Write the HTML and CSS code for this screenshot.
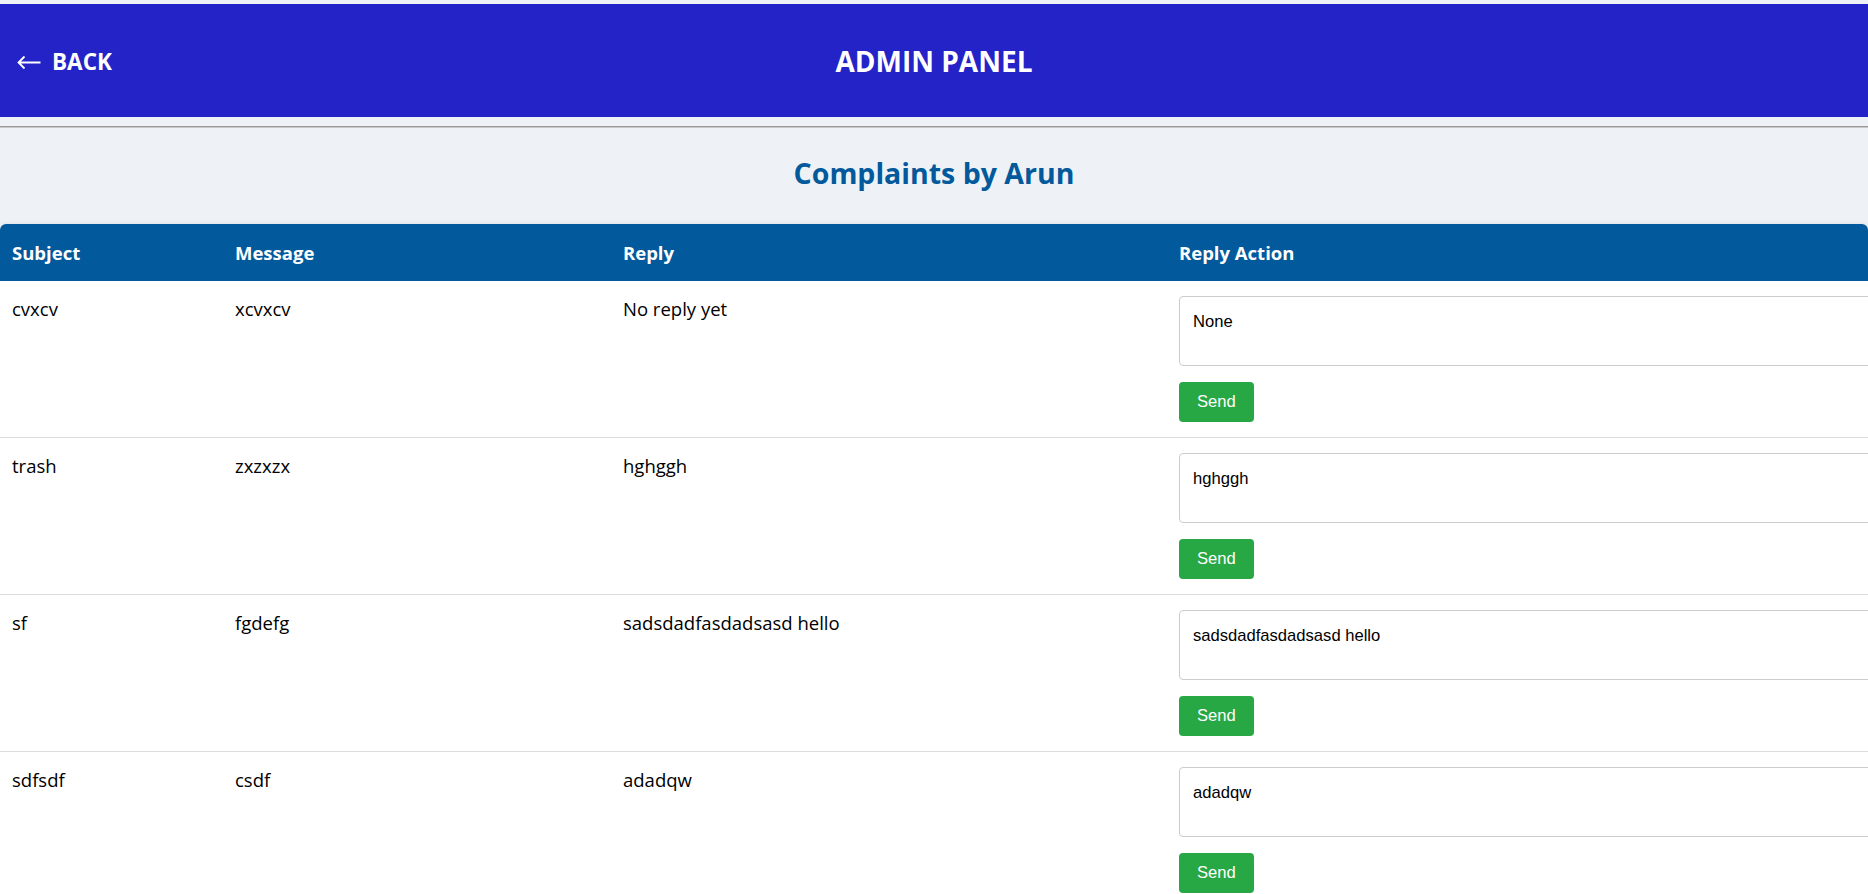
FILE: index.html
```html
<!DOCTYPE html>
<html lang="en">
<head>
<meta charset="utf-8">
<title>Admin Panel - Complaints</title>
<link rel="stylesheet" href="styles.css">
</head>
<body>
  <header class="topbar">
    <a class="back" href="#">
      <svg class="back-icon" width="24" height="14" viewBox="0 0 24 14" aria-hidden="true">
        <path d="M23.5 7H1.5M7.5 1L1.5 7L7.5 13" fill="none" stroke="#fff" stroke-width="1.8" stroke-linecap="butt" stroke-linejoin="miter"/>
      </svg>
      <span>BACK</span>
    </a>
    <h1 class="topbar-title">ADMIN PANEL</h1>
  </header>
  <hr class="divider">
  <main class="content">
    <h2 class="page-title">Complaints by Arun</h2>
    <div class="table-card">
      <table class="complaints">
        <colgroup>
          <col class="c-subject">
          <col class="c-message">
          <col class="c-reply">
          <col class="c-action">
        </colgroup>
        <thead>
          <tr>
            <th>Subject</th>
            <th>Message</th>
            <th>Reply</th>
            <th>Reply Action</th>
          </tr>
        </thead>
        <tbody>
          <tr>
            <td>cvxcv</td>
            <td>xcvxcv</td>
            <td>No reply yet</td>
            <td>
              <form class="reply-form">
                <textarea class="reply-input">None</textarea>
                <button type="button" class="send-btn">Send</button>
              </form>
            </td>
          </tr>
          <tr>
            <td>trash</td>
            <td>zxzxzx</td>
            <td>hghggh</td>
            <td>
              <form class="reply-form">
                <textarea class="reply-input">hghggh</textarea>
                <button type="button" class="send-btn">Send</button>
              </form>
            </td>
          </tr>
          <tr>
            <td>sf</td>
            <td>fgdefg</td>
            <td>sadsdadfasdadsasd hello</td>
            <td>
              <form class="reply-form">
                <textarea class="reply-input">sadsdadfasdadsasd hello</textarea>
                <button type="button" class="send-btn">Send</button>
              </form>
            </td>
          </tr>
          <tr>
            <td>sdfsdf</td>
            <td>csdf</td>
            <td>adadqw</td>
            <td>
              <form class="reply-form">
                <textarea class="reply-input">adadqw</textarea>
                <button type="button" class="send-btn">Send</button>
              </form>
            </td>
          </tr>
        </tbody>
      </table>
    </div>
  </main>
</body>
</html>
```
FILE: styles.css
```css
* { box-sizing: border-box; }

html, body {
  margin: 0;
  padding: 0;
  overflow-x: hidden;
}

body {
  background: #eef2f7;
  font-family: "Open Sans", "Noto Sans", sans-serif;
  color: #000;
  padding-top: 4px;
}

.topbar {
  position: relative;
  height: 113px;
  background: #2323c8;
  display: flex;
  align-items: center;
  justify-content: center;
}

.back {
  position: absolute;
  left: 17px;
  top: 50%;
  transform: translateY(-50%);
  display: flex;
  align-items: center;
  gap: 11px;
  color: #fff;
  text-decoration: none;
  font-weight: 700;
  font-size: 22.5px;
}

.back-icon {
  display: block;
  margin-top: 3px;
}

.topbar-title {
  margin: 0;
  color: #fff;
  font-size: 28px;
  font-weight: 700;
}

.divider {
  margin: 9px 0 0 0;
  border: none;
  border-top: 1px solid #9a9a9a;
  border-bottom: 1px solid #c8c8c8;
  height: 0;
}

.content {
  display: flex;
  flex-direction: column;
}

.page-title {
  margin: 0;
  height: 96px;
  padding-bottom: 7px;
  display: flex;
  align-items: center;
  justify-content: center;
  color: #02599b;
  font-size: 28.5px;
  font-weight: 700;
}

.table-card {
  background: #fff;
  border-radius: 6px 6px 0 0;
  overflow: hidden;
  box-shadow: 0 -1px 4px rgba(0, 0, 0, 0.06);
}

.complaints {
  width: 100%;
  border-collapse: collapse;
  table-layout: fixed;
}

.c-subject { width: 223px; }
.c-message { width: 388px; }
.c-reply { width: 556px; }

.complaints th {
  background: #02599b;
  color: #fff;
  text-align: left;
  font-weight: 700;
  font-size: 18.5px;
  height: 57px;
  padding: 0 12px;
  vertical-align: middle;
}

.complaints td {
  font-size: 18.5px;
  line-height: 26px;
  padding: 15px 12px;
  vertical-align: top;
  border-bottom: 1px solid #dcdcdc;
  overflow: visible;
}

.reply-form {
  margin: 0;
  display: flex;
  flex-direction: column;
  align-items: flex-start;
  gap: 16px;
}

.reply-input {
  display: block;
  width: 760px;
  height: 70px;
  padding: 15px 13px 10px;
  border: 1px solid #cccccc;
  border-radius: 4px;
  font-family: "Liberation Sans", Arial, sans-serif;
  font-size: 16.6px;
  color: #000;
  resize: none;
  background: #fff;
}

.send-btn {
  height: 40px;
  padding: 0 18px;
  border: none;
  border-radius: 4px;
  background: #28a745;
  color: #fff;
  font-family: "Liberation Sans", Arial, sans-serif;
  font-size: 16.6px;
  cursor: pointer;
}
```
